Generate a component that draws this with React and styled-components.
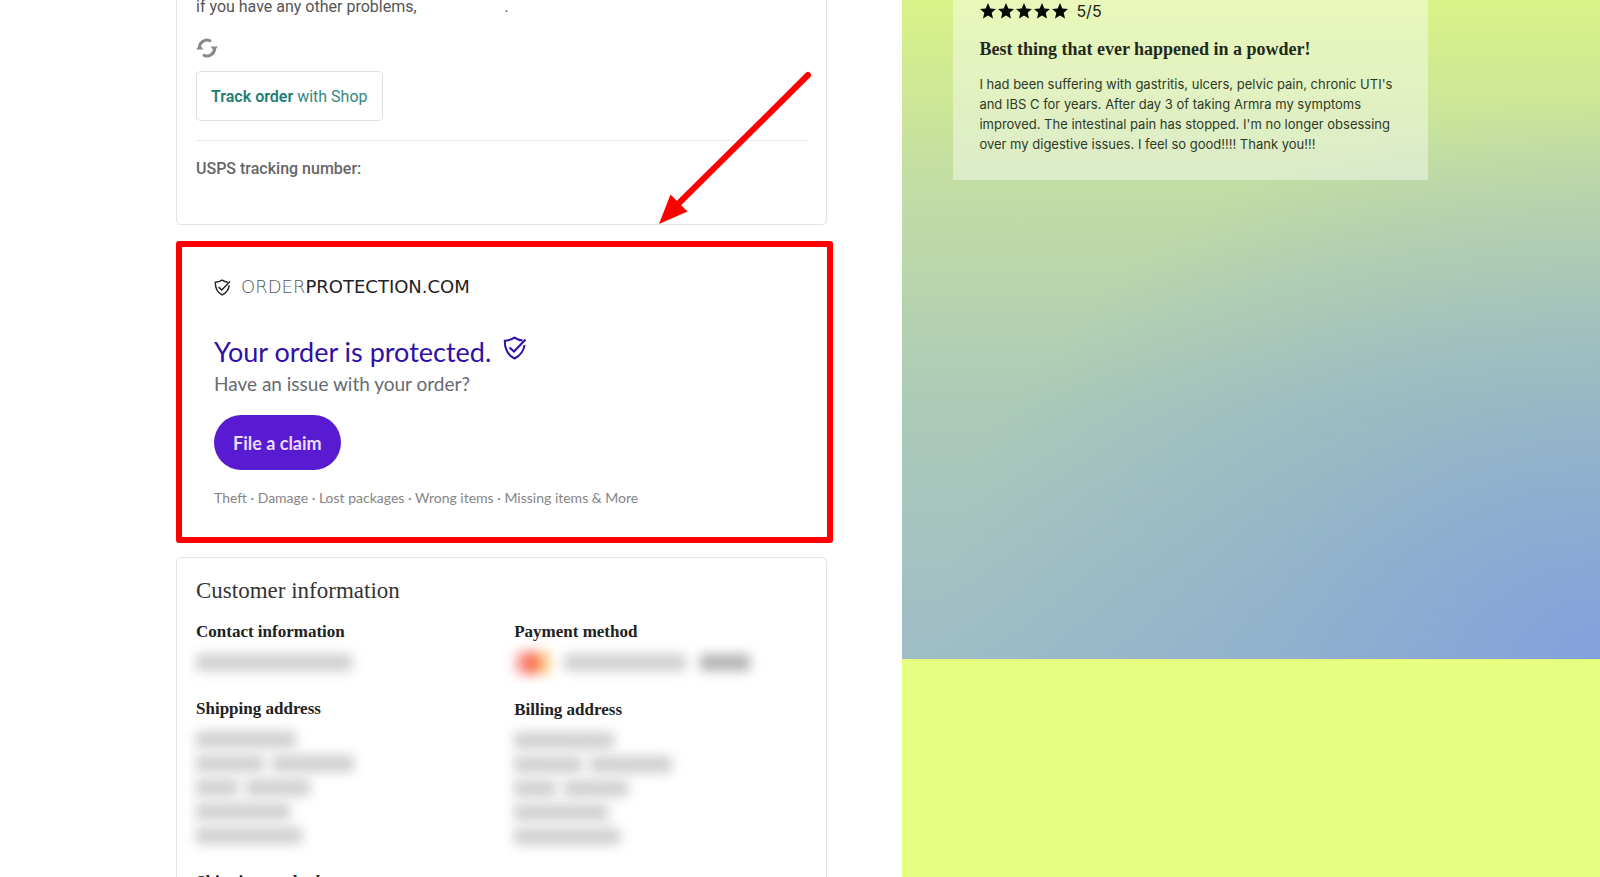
import styled, { createGlobalStyle } from 'styled-components';

// Style

const GlobalStyle = createGlobalStyle`
  * {
    box-sizing: border-box;
  }

  body {
    margin: 0;
    background: #fff;
    font-family: Roboto, sans-serif;
    font-size: 16px;
    color: #555;
  }

  h1, h2, h3, p {
    margin: 0;
  }
`;

const Page = styled.div`
  display: grid;
  grid-template-columns: 564fr 436fr;
  height: 100vh;
  overflow: hidden;
`;

const Main = styled.main`
  position: relative;
  min-width: 0;
  padding: 0 69px 0 176px;
`;

const Card = styled.section`
  margin-right: 6px;
  padding: 0 19px;
  border: 1px solid #e4e4e4;
  border-radius: 5px;
  box-shadow: 0 0 1px #e4e4e4;
`;

const TrackingCard = styled(Card)`
  padding-bottom: 43px;
  border-top: none;
  border-radius: 0 0 5px 5px;
`;

const HelpText = styled.p`
  display: flex;
  gap: 88px;
  line-height: 14px;
`;

const RefreshIcon = styled.svg`
  display: block;
  width: 22px;
  height: 20px;
  margin-top: 24px;
`;

const TrackButton = styled.button`
  display: block;
  height: 50px;
  margin-top: 13px;
  padding: 0 14px;
  border: 1px solid #dedede;
  border-radius: 5px;
  background: #fff;
  font-family: inherit;
  font-size: 16px;
  color: #35877f;

  strong {
    font-weight: 600;
    color: #1d7f76;
  }
`;

const Divider = styled.hr`
  margin: 19px 0 16px;
  border: none;
  border-top: 1px solid #e8e8e8;
`;

const TrackingNumber = styled.p`
  line-height: 24px;
  font-weight: 500;
  color: #666;
`;

const ProtectionCard = styled.section`
  margin: 16px 0 14px;
  padding: 30px 32px 29px;
  border: 6px solid #f00;
  border-radius: 3px;
  font-family: Lato, sans-serif;
`;

const Brand = styled.div`
  display: flex;
  align-items: center;
  gap: 10px;
  font-family: 'DejaVu Sans', sans-serif;
  font-size: 18px;
  line-height: 20px;
  color: #222;

  span {
    font-weight: 200;
    color: #555;
  }
`;

const ProtectionTitle = styled.h1`
  display: flex;
  align-items: flex-start;
  gap: 12px;
  margin-top: 39px;
  font-size: 27px;
  line-height: 32px;
  font-weight: 400;
  color: #2f0fa8;
`;

const ProtectionText = styled.p`
  margin-top: 4px;
  font-size: 19px;
  line-height: 24px;
  color: #666b70;
`;

const ClaimButton = styled.button`
  height: 55px;
  margin-top: 19px;
  padding: 0 19px;
  border: none;
  border-radius: 28px;
  background: #591bd1;
  font-family: inherit;
  font-size: 18px;
  font-weight: 700;
  color: #ecdcff;
`;

const Coverage = styled.p`
  margin-top: 18px;
  font-size: 14px;
  line-height: 20px;
  color: #858585;
`;

const CustomerCard = styled(Card)`
  padding-top: 19px;
  font-family: 'Liberation Serif', serif;
  color: #222;
`;

const CardTitle = styled.h2`
  font-size: 23px;
  line-height: 28px;
  font-weight: 400;
  color: #333;
`;

const Columns = styled.div`
  display: grid;
  grid-template-columns: 1fr 1fr;
  gap: 25px;
  margin-top: 15px;
`;

const Column = styled.div`
  display: flex;
  flex-direction: column;
  gap: 23px;
`;

const FieldTitle = styled.h3`
  margin-bottom: 6px;
  font-size: 17px;
  line-height: 24px;
  font-weight: 700;
`;

const HiddenLine = styled.div`
  display: flex;
  align-items: center;
  gap: 8px;
  height: 24px;
  filter: blur(6px);
`;

const HiddenPayment = styled(HiddenLine)`
  height: 25px;
  gap: 14px;
`;

const HiddenWord = styled.span`
  width: ${({ $width }) => $width}px;
  height: 17px;
  background: ${({ $dark }) => ($dark ? '#b4b4b4' : '#cfcfcf')};
`;

const CardBrand = styled.span`
  width: 36px;
  height: 22px;
  background: linear-gradient(90deg, #ffd3d8, #f5573f 48%, #ffd08a 85%);
`;

const Arrow = styled.svg`
  position: absolute;
  top: 68px;
  left: 655px;
  width: 160px;
  height: 160px;
`;

const Aside = styled.aside`
  display: flex;
  flex-direction: column;
  min-width: 0;
  background: #e7ff81;
`;

const Hero = styled.div`
  height: 659px;
  padding: 0 172px 0 51px;
  background:
    radial-gradient(ellipse 95% 85% at 100% 100%, rgba(124, 153, 226, 0.8), rgba(126, 160, 215, 0.4) 50%, rgba(140, 180, 200, 0)),
    linear-gradient(180deg, #d9f287, #c2dda4 28%, #abcab8 62%, #9fbdc6);
`;

const Review = styled.article`
  padding: 0 26px 26px;
  background: rgba(255, 255, 255, 0.42);
  font-family: Inter, sans-serif;
  color: #2f3a24;
`;

const Rating = styled.div`
  display: flex;
  align-items: center;
  gap: 7px;
  height: 21px;
  font-size: 16px;
  color: #1c2215;
`;

const Stars = styled.svg`
  width: 90px;
  height: 18px;
`;

const ReviewTitle = styled.h2`
  margin: 16px 0 13px;
  font-family: 'Liberation Serif', serif;
  font-size: 18px;
  line-height: 24px;
  font-weight: 700;
  color: #1f2a1a;
`;

const ReviewText = styled.p`
  font-size: 13px;
  line-height: 20px;
`;

// Logic

const addressLines = [[100], [68, 82], [42, 64], [94], [106]];

function Shield({ size }) {
  return (
    <svg width={size} height={size} viewBox="0 0 24 24" fill="none" stroke="currentColor" strokeWidth="2">
      <path d="M19.5 4.5C16.500 4.300 14 3.400 11.500 1.700C8.500 3.700 5.300 4.600 1.800 4.700C1.700 13 4.500 19 11.500 22.500C17.500 19.500 20.800 15 21.500 9" />
      <path d="M6.500 11.500L11 15.500L22.500 3.500" />
    </svg>
  );
}

function HiddenAddress() {
  return addressLines.map((words, i) => (
    <HiddenLine key={i}>
      {words.map((width, j) => (
        <HiddenWord key={j} $width={width} />
      ))}
    </HiddenLine>
  ));
}

function Tracking() {
  return (
    <TrackingCard>
      <HelpText>
        <span>if you have any other problems,</span>
        <span>.</span>
      </HelpText>
      <RefreshIcon viewBox="0 0 22 20" fill="none" stroke="#888" strokeWidth="3">
        <path d="M3.500 10.500A7.500 7.500 0 0 1 15 3.300" />
        <path d="M18.500 9.500A7.500 7.500 0 0 1 7 16.700" />
        <path d="M0 11.500L3.800 7L7.500 11.500ZM14.500 8.500H22L18.200 13Z" fill="#888" stroke="none" />
      </RefreshIcon>
      <TrackButton>
        <strong>Track order</strong> with Shop
      </TrackButton>
      <Divider />
      <TrackingNumber>USPS tracking number:</TrackingNumber>
    </TrackingCard>
  );
}

function Protection() {
  return (
    <ProtectionCard>
      <Brand>
        <Shield size={17} />
        <div>
          <span>ORDER</span>PROTECTION.COM
        </div>
      </Brand>
      <ProtectionTitle>
        Your order is protected.
        <Shield size={24} />
      </ProtectionTitle>
      <ProtectionText>Have an issue with your order?</ProtectionText>
      <ClaimButton>File a claim</ClaimButton>
      <Coverage>Theft · Damage · Lost packages · Wrong items · Missing items &amp; More</Coverage>
    </ProtectionCard>
  );
}

function Customer() {
  return (
    <CustomerCard>
      <CardTitle>Customer information</CardTitle>
      <Columns>
        <Column>
          <div>
            <FieldTitle>Contact information</FieldTitle>
            <HiddenLine>
              <HiddenWord $width={156} />
            </HiddenLine>
          </div>
          <div>
            <FieldTitle>Shipping address</FieldTitle>
            <HiddenAddress />
          </div>
          <FieldTitle>Shipping method</FieldTitle>
        </Column>
        <Column>
          <div>
            <FieldTitle>Payment method</FieldTitle>
            <HiddenPayment>
              <CardBrand />
              <HiddenWord $width={122} />
              <HiddenWord $width={50} $dark />
            </HiddenPayment>
          </div>
          <div>
            <FieldTitle>Billing address</FieldTitle>
            <HiddenAddress />
          </div>
        </Column>
      </Columns>
    </CustomerCard>
  );
}

export default function App() {
  return (
    <Page>
      <GlobalStyle />
      <Main>
        <Tracking />
        <Protection />
        <Customer />
        <Arrow viewBox="0 0 160 160">
          <path d="M153 7L22 137" stroke="#f00" strokeWidth="6" strokeLinecap="round" />
          <path d="M4 156L15.500 126.500L32.500 143.500Z" fill="#f00" />
        </Arrow>
      </Main>
      <Aside>
        <Hero>
          <Review>
            <Rating>
              <Stars viewBox="0 0 90 18" fill="#050805">
                {[0, 1, 2, 3, 4].map((i) => (
                  <path
                    key={i}
                    transform={`translate(${i * 18} 0)`}
                    d="M9 1L11.300 6.400L17 6.900L12.700 10.700L14 16.500L9 13.500L4 16.500L5.300 10.700L1 6.900L6.700 6.400Z"
                  />
                ))}
              </Stars>
              5/5
            </Rating>
            <ReviewTitle>Best thing that ever happened in a powder!</ReviewTitle>
            <ReviewText>
              I had been suffering with gastritis, ulcers, pelvic pain, chronic UTI's and IBS C for years. After day 3
              of taking Armra my symptoms improved. The intestinal pain has stopped. I'm no longer obsessing over my
              digestive issues. I feel so good!!!! Thank you!!!
            </ReviewText>
          </Review>
        </Hero>
      </Aside>
    </Page>
  );
}
